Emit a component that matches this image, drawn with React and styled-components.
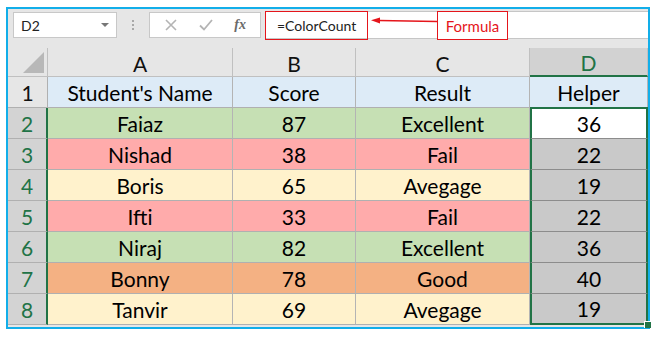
import React from 'react'
import styled, { createGlobalStyle } from 'styled-components'

const GlobalStyle = createGlobalStyle`
  html, body {
    margin: 0;
    padding: 0;
    background: #ffffff;
  }
  body {
    font-family: Lato, 'Open Sans', sans-serif;
  }
`

const Page = styled.div`
  width: 658px;
  height: 337px;
  padding: 7px 0 0 6px;
  box-sizing: border-box;
`

const Frame = styled.div`
  width: 644px;
  height: 322px;
  box-sizing: border-box;
  border: 2px solid #12aee9;
  background: #e6e6e6;
  display: flex;
  flex-direction: column;
`

const FormulaBar = styled.div`
  height: 39px;
  display: flex;
  align-items: flex-start;
  padding: 2px 0 0 5px;
  box-sizing: border-box;
`

const NameBox = styled.div`
  width: 104px;
  height: 26px;
  margin-top: 1px;
  box-sizing: border-box;
  background: #fff;
  border: 1px solid #c8c8c8;
  display: flex;
  align-items: center;
  justify-content: space-between;
  padding: 0 7px 0 7px;
  font-size: 14px;
  color: #222;
`

const Caret = styled.span`
  width: 0;
  height: 0;
  border-left: 4px solid transparent;
  border-right: 4px solid transparent;
  border-top: 4px solid #777;
`

const Dots = styled.div`
  width: 32px;
  height: 28px;
  display: flex;
  flex-direction: column;
  align-items: center;
  justify-content: center;
  gap: 2px;
  & span {
    width: 2px;
    height: 2px;
    background: #a8a8a8;
  }
`

const FxBox = styled.div`
  width: 112px;
  height: 26px;
  margin-top: 1px;
  box-sizing: border-box;
  background: #fff;
  border: 1px solid #c8c8c8;
  display: flex;
  align-items: center;
  justify-content: space-around;
  padding: 0 4px;
`

const Fx = styled.span`
  font-family: 'Liberation Serif', serif;
  font-style: italic;
  font-weight: bold;
  font-size: 14px;
  color: #6a6a6a;
`

const FormulaInput = styled.div`
  position: relative;
  flex: 1;
  margin-left: 4px;
  height: 28px;
  box-sizing: border-box;
  background: #fff;
  border-top: 1px solid #c6c6c6;
  border-bottom: 1px solid #c6c6c6;
`

const FormulaText = styled.div`
  position: absolute;
  left: 0;
  top: -1px;
  width: 103px;
  height: 29px;
  box-sizing: border-box;
  border: 1px solid #e5151b;
  padding-left: 11px;
  display: flex;
  align-items: center;
  font-size: 14px;
  color: #222;
`

const Arrow = styled.svg`
  position: absolute;
  left: 106px;
  top: 5px;
`

const Callout = styled.div`
  position: absolute;
  left: 172px;
  top: -1px;
  width: 71px;
  height: 29px;
  box-sizing: border-box;
  border: 1px solid #e5151b;
  background: #fff;
  color: #e5151b;
  font-size: 15px;
  display: flex;
  align-items: center;
  justify-content: center;
`

const Sheet = styled.div`
  display: grid;
  grid-template-columns: 40px 185px 123px 174px 118px;
  grid-template-rows: 29px repeat(8, 31px);
`

const Corner = styled.div`
  background: #e6e6e6;
  border-right: 1px solid #c0c0c0;
  border-bottom: 1px solid #c0c0c0;
  box-sizing: border-box;
  display: flex;
  align-items: flex-end;
  justify-content: flex-end;
  padding: 0 3px 3px 0;
  & span {
    width: 0;
    height: 0;
    border-left: 21px solid transparent;
    border-bottom: 21px solid #b8b8b8;
  }
`

const ColHead = styled.div`
  background: ${p => (p.$active ? '#d2d2d2' : '#e6e6e6')};
  color: ${p => (p.$active ? '#217346' : '#111')};
  border-right: 1px solid #c0c0c0;
  border-bottom: ${p => (p.$active ? '2px solid #217346' : '1px solid #c0c0c0')};
  box-sizing: border-box;
  display: flex;
  align-items: center;
  justify-content: center;
  font-size: 21px;
  padding-top: 2px;
`

const RowHead = styled.div`
  background: ${p => (p.$active ? '#d3d3d3' : '#e6e6e6')};
  color: ${p => (p.$active ? '#217346' : '#111')};
  border-bottom: 1px solid #b0b0b0;
  border-right: ${p => (p.$active ? '2px solid #217346' : '1px solid #b0b0b0')};
  box-sizing: border-box;
  display: flex;
  align-items: center;
  justify-content: center;
  font-size: 21px;
`

const Cell = styled.div`
  position: relative;
  background: ${p => p.$bg};
  border-right: 1px solid #b4b4b4;
  border-bottom: 1px solid #b0b0b0;
  box-sizing: border-box;
  display: flex;
  align-items: center;
  justify-content: center;
  font-size: 21px;
  color: #000;
`

const HelperCell = styled(Cell)`
  border-left: 2px solid #217346;
  border-right: 2px solid #217346;
  border-top: ${p => (p.$first ? '2px solid #217346' : 'none')};
  border-bottom: ${p => (p.$last ? '2px solid #217346' : '1px solid #8c8c8c')};
  margin-top: ${p => (p.$first ? '-1px' : '0')};
`

const Handle = styled.span`
  position: absolute;
  right: -5px;
  bottom: -5px;
  width: 6px;
  height: 6px;
  background: #217346;
  border: 1px solid #fff;
  border-width: 1px 0 0 1px;
`

const fills = {
  head: '#ddebf7',
  Excellent: '#c6e0b4',
  Fail: '#ffabab',
  Avegage: '#fff2cc',
  Good: '#f4b183'
}

const rows = [
  ['Faiaz', 87, 'Excellent', 36],
  ['Nishad', 38, 'Fail', 22],
  ['Boris', 65, 'Avegage', 19],
  ['Ifti', 33, 'Fail', 22],
  ['Niraj', 82, 'Excellent', 36],
  ['Bonny', 78, 'Good', 40],
  ['Tanvir', 69, 'Avegage', 19]
]

const App = () => {
  return (
    <Page>
      <GlobalStyle />
      <Frame>
        <FormulaBar>
          <NameBox>
            D2
            <Caret />
          </NameBox>
          <Dots>
            <span />
            <span />
            <span />
          </Dots>
          <FxBox>
            <svg width='14' height='14' viewBox='0 0 14 14'>
              <path d='M2 2 L12 12 M12 2 L2 12' stroke='#b4b4b4' strokeWidth='1.6' />
            </svg>
            <svg width='16' height='14' viewBox='0 0 16 14'>
              <path d='M2 7.5 L6 11.5 L14 2' stroke='#b4b4b4' strokeWidth='1.8' fill='none' />
            </svg>
            <Fx>fx</Fx>
          </FxBox>
          <FormulaInput>
            <FormulaText>=ColorCount</FormulaText>
            <Arrow width='66' height='8' viewBox='0 0 66 8'>
              <path d='M8 3.5 L66 4.5' stroke='#e5151b' strokeWidth='1.3' />
              <path d='M0 3.3 L9 0.5 L9 6.5 Z' fill='#e5151b' />
            </Arrow>
            <Callout>Formula</Callout>
          </FormulaInput>
        </FormulaBar>
        <Sheet>
          <Corner>
            <span />
          </Corner>
          <ColHead>A</ColHead>
          <ColHead>B</ColHead>
          <ColHead>C</ColHead>
          <ColHead $active>D</ColHead>

          <RowHead>1</RowHead>
          <Cell $bg={fills.head}>Student's Name</Cell>
          <Cell $bg={fills.head}>Score</Cell>
          <Cell $bg={fills.head}>Result</Cell>
          <Cell $bg={fills.head}>Helper</Cell>

          {rows.map((r, i) => (
            <React.Fragment key={r[0]}>
              <RowHead $active>{i + 2}</RowHead>
              <Cell $bg={fills[r[2]]}>{r[0]}</Cell>
              <Cell $bg={fills[r[2]]}>{r[1]}</Cell>
              <Cell $bg={fills[r[2]]}>{r[2]}</Cell>
              <HelperCell
                $bg={i === 0 ? '#ffffff' : '#c9c9c9'}
                $first={i === 0}
                $last={i === rows.length - 1}
              >
                {r[3]}
                {i === rows.length - 1 && <Handle />}
              </HelperCell>
            </React.Fragment>
          ))}
        </Sheet>
      </Frame>
    </Page>
  )
}

export default App
